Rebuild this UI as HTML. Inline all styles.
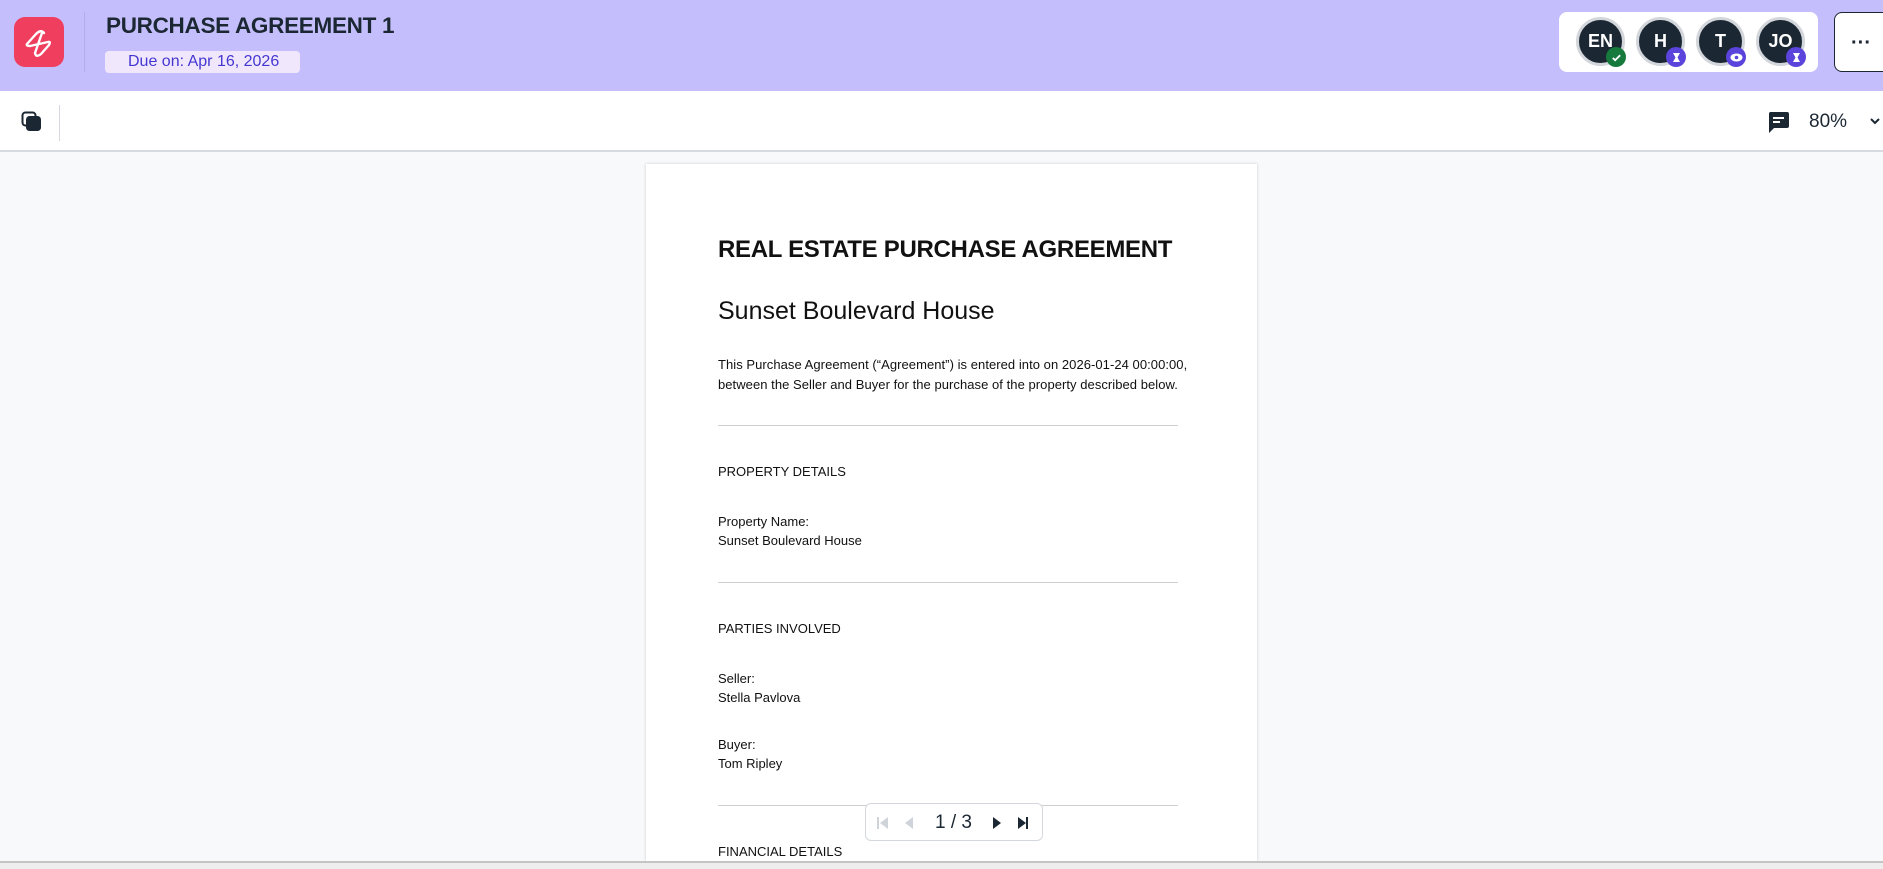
<!DOCTYPE html>
<html style="width:1883px;height:869px;overflow:hidden"><head><meta charset="utf-8"><style>
*{box-sizing:border-box;margin:0;padding:0}
body{width:1883px;height:869px;overflow:hidden;background:#f8f9fb;font-family:"Liberation Sans",sans-serif;position:relative;color:#1b2733}
.hdr{position:absolute;left:0;top:0;width:1883px;height:91px;background:#c4bffc}
.logo{position:absolute;left:14px;top:17px;width:50px;height:50px;border-radius:11px;background:#f03e5e}
.vd{position:absolute;left:84px;top:12px;width:1px;height:60px;background:#b4aeea}
.title{position:absolute;left:106px;top:13px;font-size:22.5px;font-weight:bold;color:#1b2733;letter-spacing:-0.3px}
.due{position:absolute;left:105px;top:51px;width:195px;height:22px;border-radius:4px;background:#f1e7fd;color:#4437d0;font-size:16px;line-height:22px;padding-left:23px}
.av{position:absolute;left:1559px;top:12px;width:259px;height:60px;background:#fff;border-radius:8px}
.a{position:absolute;top:5px;width:49px;height:49px;border-radius:50%;background:#1b2733;border:3px solid #d3d6db;color:#fff;font-weight:bold;font-size:18px;text-align:center;line-height:43px}
.b{position:absolute;right:-4px;bottom:-4px;width:20px;height:20px;border-radius:50%;display:flex;align-items:center;justify-content:center}
.more{position:absolute;left:1834px;top:12px;width:70px;height:60px;border:1.5px solid #1b2733;border-radius:8px;background:#fff;font-size:20px;font-weight:bold;line-height:60px;padding-left:16px}
.tb{position:absolute;left:0;top:91px;width:1883px;height:61px;background:#fff;border-bottom:2px solid #d7dae0}
.page{position:absolute;left:646px;top:164px;width:611px;height:697px;background:#fff;box-shadow:0 0 3px rgba(0,0,0,.18)}
.t{position:absolute;left:72px;white-space:nowrap;color:#111}
.hr{position:absolute;left:72px;width:460px;height:1px;background:#cfcfcf}
.s{font-size:13px}
.pager{position:absolute;left:865px;top:803px;width:178px;height:38px;background:#fff;border:1px solid #d4d7dc;border-radius:6px}
.foot{position:absolute;left:0;top:861px;width:1883px;height:8px;background:#eee;border-top:2px solid #c4c4c4;z-index:5}
</style></head><body>
<div class="hdr">
 <div class="logo"><svg width="50" height="50" viewBox="0 0 50 50"><path d="M30 16 Q27 12 22 17 L13 27 Q12 29 16 29 L34 25 Q37 24 35 28 L27 37 Q22 41 21 36 L28 16" fill="none" stroke="#fff" stroke-width="2.4" stroke-linecap="round" stroke-linejoin="round"/></svg></div>
 <div class="vd"></div>
 <div class="title">PURCHASE AGREEMENT 1</div>
 <div class="due">Due on: Apr 16, 2026</div>
 <div class="av">
  <div class="a" style="left:17px">EN<div class="b" style="background:#157a3c"><svg width="11" height="11" viewBox="0 0 12 12"><path d="M2 6.5l2.5 2.5L10 3.5" stroke="#fff" stroke-width="2" fill="none"/></svg></div></div>
  <div class="a" style="left:77px">H<div class="b" style="background:#5a44dc"><svg width="9" height="11" viewBox="0 0 9 11"><path d="M1 1h7L5.5 5.5 8 10H1l2.5-4.5z" fill="#fff"/></svg></div></div>
  <div class="a" style="left:137px">T<div class="b" style="background:#5a44dc"><svg width="13" height="9" viewBox="0 0 13 9"><ellipse cx="6.5" cy="4.5" rx="6" ry="4" fill="#fff"/><circle cx="6.5" cy="4.5" r="1.8" fill="#5a44dc"/></svg></div></div>
  <div class="a" style="left:197px">JO<div class="b" style="background:#5a44dc"><svg width="9" height="11" viewBox="0 0 9 11"><path d="M1 1h7L5.5 5.5 8 10H1l2.5-4.5z" fill="#fff"/></svg></div></div>
 </div>
 <div class="more">···</div>
</div>
<div class="tb">
 <svg style="position:absolute;left:21px;top:20px" width="22" height="22" viewBox="0 0 22 22"><rect x="1.5" y="1.5" width="13" height="13" rx="3" fill="none" stroke="#1b2733" stroke-width="2"/><rect x="5" y="5" width="15" height="15" rx="3.5" fill="#1b2733"/></svg>
 <div style="position:absolute;left:59px;top:14px;width:1px;height:36px;background:#d5d8dd"></div>
 <svg style="position:absolute;left:1767px;top:20px" width="23" height="23" viewBox="0 0 23 23"><path d="M3 1h17a2 2 0 0 1 2 2v12a2 2 0 0 1-2 2H7l-5 5V3a2 2 0 0 1 1-2z" fill="#1b2733"/><rect x="6" y="6" width="11" height="2" fill="#fff"/><rect x="6" y="10" width="7" height="2" fill="#fff"/></svg>
 <div style="position:absolute;left:1809px;top:20px;font-size:19px;color:#1b2733">80%</div>
 <svg style="position:absolute;left:1869px;top:26px" width="12" height="8" viewBox="0 0 12 8"><path d="M2 2l4 4 4-4" stroke="#1b2733" stroke-width="2" fill="none"/></svg>
</div>
<div class="page">
 <div class="t" style="top:72px;font-size:24px;font-weight:bold;letter-spacing:-0.3px">REAL ESTATE PURCHASE AGREEMENT</div>
 <div class="t" style="top:133px;font-size:25px">Sunset Boulevard House</div>
 <div class="t s" style="top:191px;line-height:20px;letter-spacing:0.05px">This Purchase Agreement (“Agreement”) is entered into on 2026-01-24 00:00:00,<br>between the Seller and Buyer for the purchase of the property described below.</div>
 <div class="hr" style="top:261px"></div>
 <div class="t s" style="top:300px">PROPERTY DETAILS</div>
 <div class="t s" style="top:348px;line-height:19px">Property Name:<br>Sunset Boulevard House</div>
 <div class="hr" style="top:418px"></div>
 <div class="t s" style="top:457px">PARTIES INVOLVED</div>
 <div class="t s" style="top:505px;line-height:19px">Seller:<br>Stella Pavlova</div>
 <div class="t s" style="top:571px;line-height:19px">Buyer:<br>Tom Ripley</div>
 <div class="hr" style="top:641px"></div>
 <div class="t s" style="top:680px">FINANCIAL DETAILS</div>
</div>
<div class="pager">
 <svg style="position:absolute;left:10px;top:12px" width="14" height="14" viewBox="0 0 14 14"><rect x="1" y="1" width="2" height="12" fill="#cfd3da"/><path d="M12 1v12L4 7z" fill="#cfd3da"/></svg>
 <svg style="position:absolute;left:37px;top:12px" width="12" height="14" viewBox="0 0 12 14"><path d="M10 1v12L2 7z" fill="#cfd3da"/></svg>
 <div style="position:absolute;left:69px;top:8px;font-size:19px;color:#1b2733">1 / 3</div>
 <svg style="position:absolute;left:125px;top:12px" width="12" height="14" viewBox="0 0 12 14"><path d="M2 1v12l8-6z" fill="#1b2733"/></svg>
 <svg style="position:absolute;left:150px;top:12px" width="14" height="14" viewBox="0 0 14 14"><path d="M2 1v12l8-6z" fill="#1b2733"/><rect x="10" y="1" width="2" height="12" fill="#1b2733"/></svg>
</div>
<div class="foot"></div>
</body></html>
